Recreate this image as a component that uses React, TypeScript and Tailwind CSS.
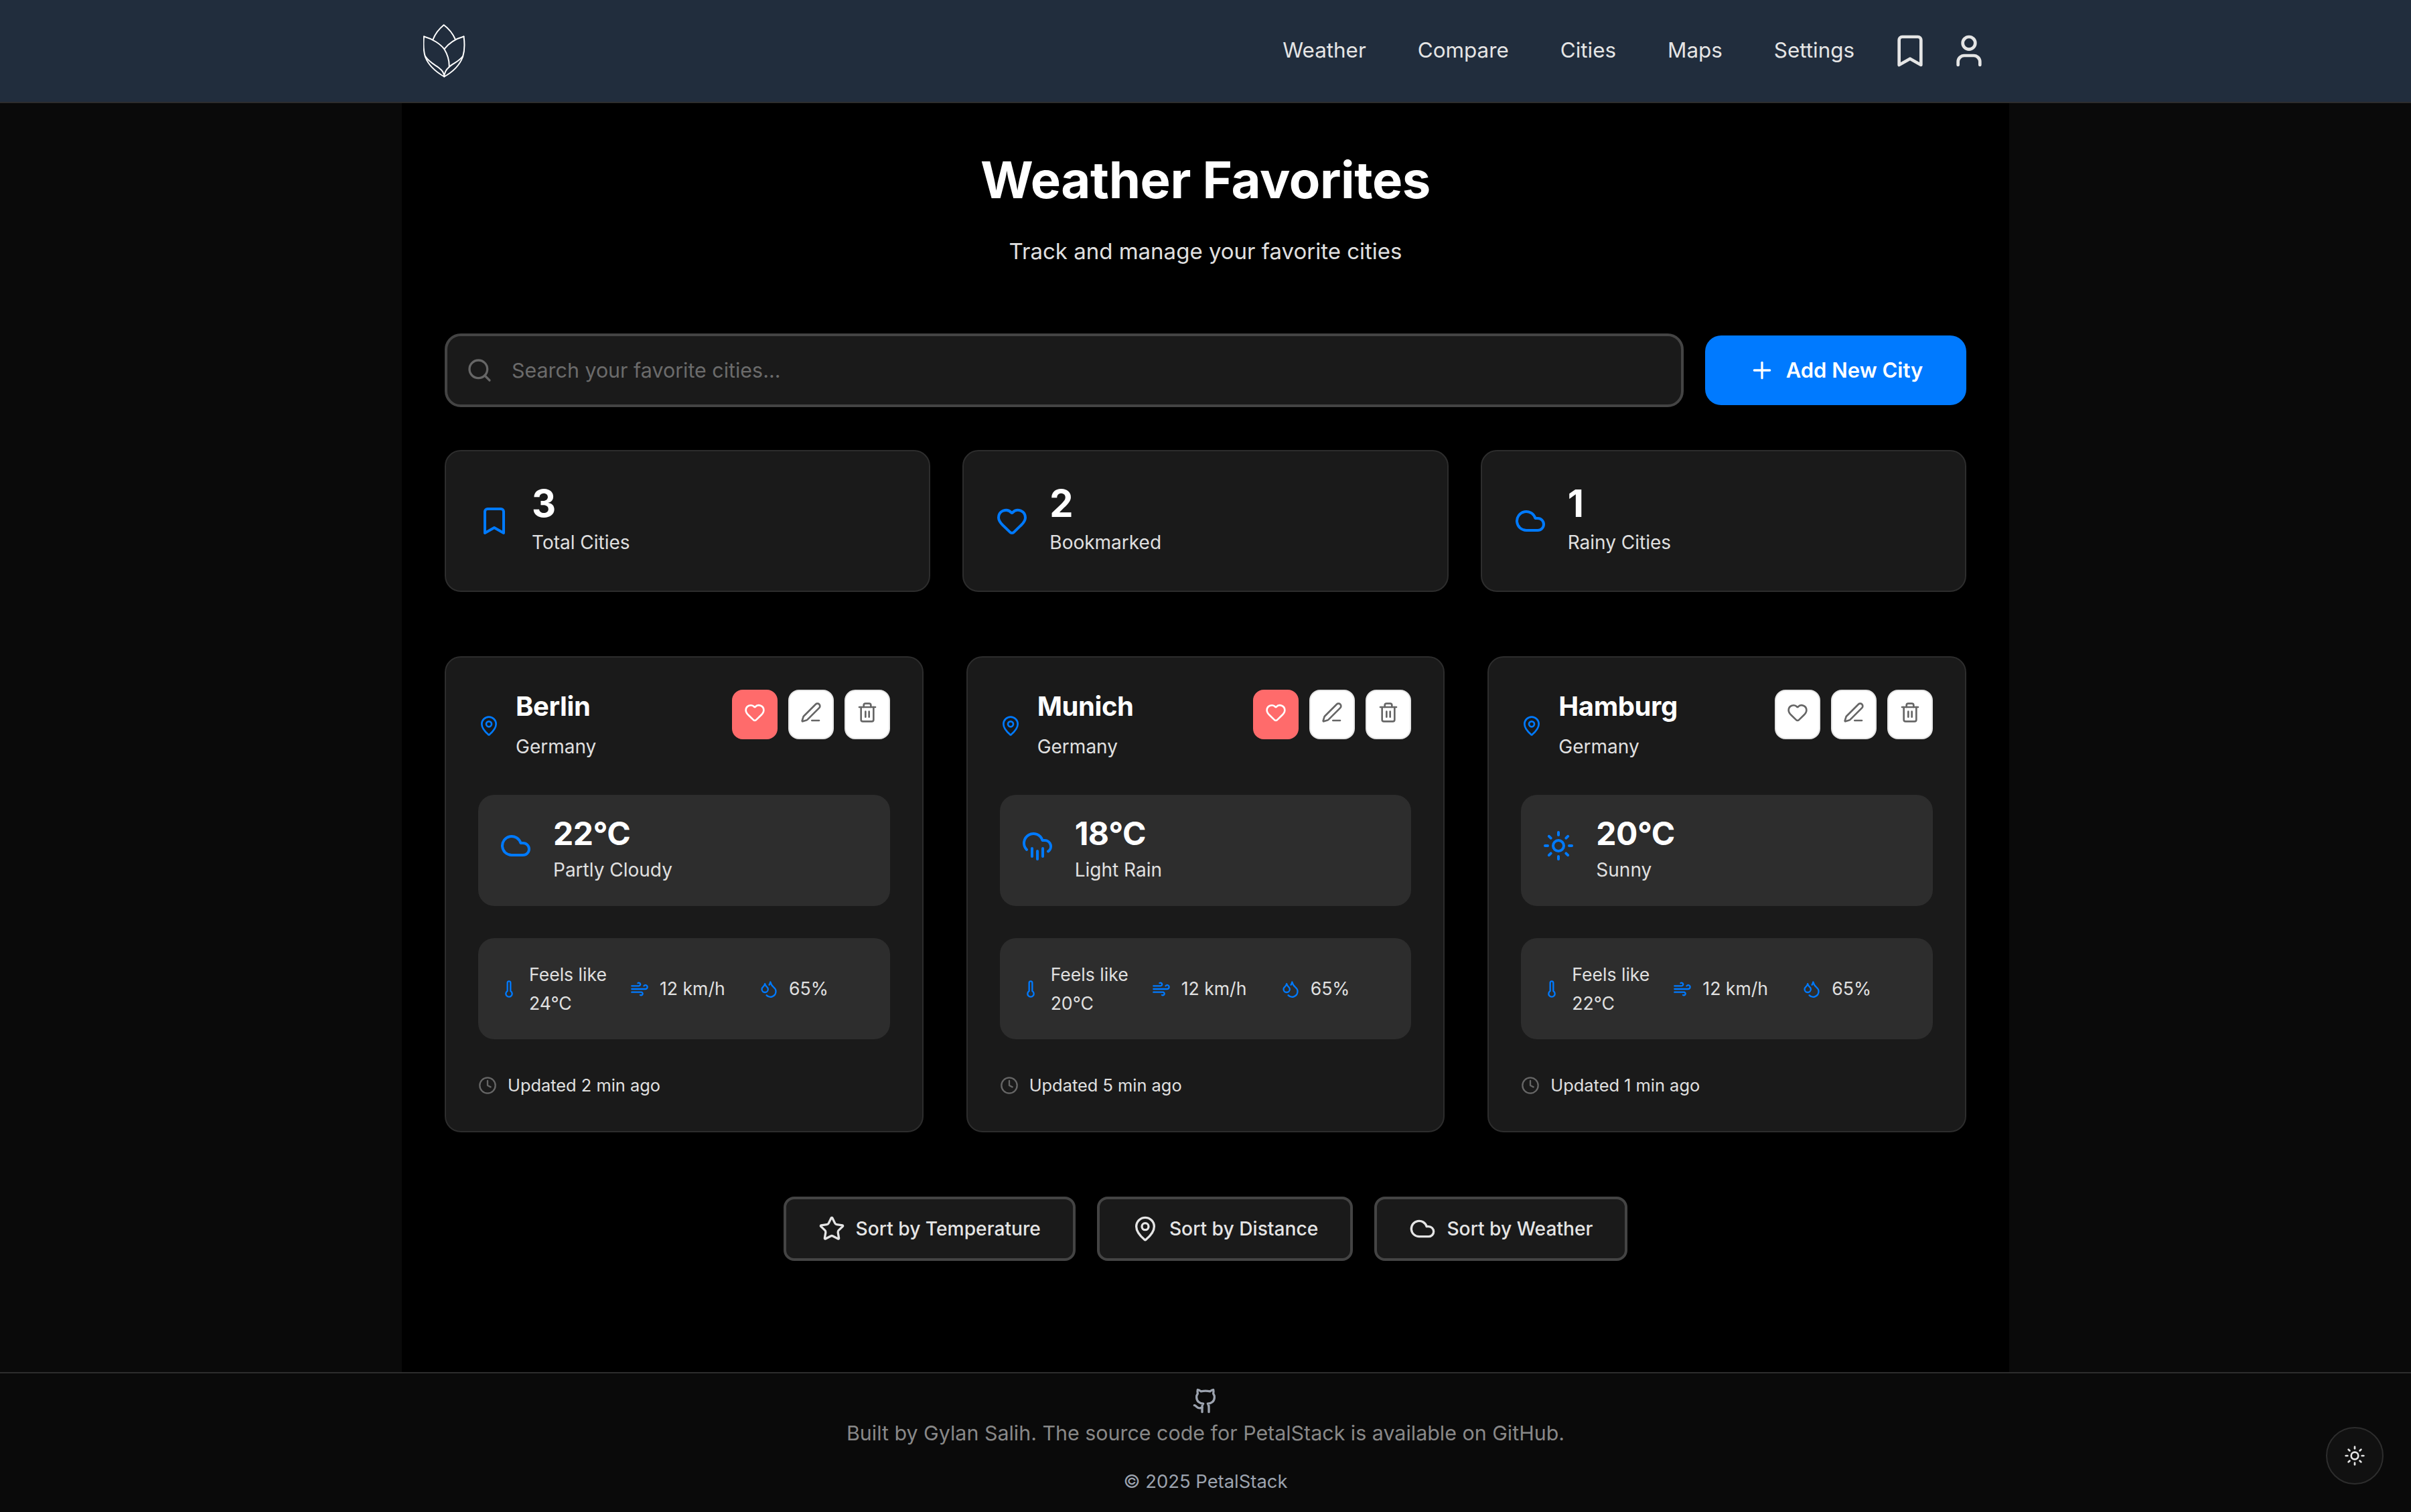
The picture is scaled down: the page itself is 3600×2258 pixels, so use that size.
import React from "react";
import {
  Bookmark,
  Clock,
  Cloud,
  CloudRain,
  Droplets,
  Github,
  Heart,
  MapPin,
  PenLine,
  Plus,
  Search,
  Star,
  Sun,
  Thermometer,
  Trash2,
  User,
  Wind,
} from "lucide-react";

const navLinks = ["Weather", "Compare", "Cities", "Maps", "Settings"];

const stats = [
  { icon: Bookmark, value: "3", label: "Total Cities" },
  { icon: Heart, value: "2", label: "Bookmarked" },
  { icon: Cloud, value: "1", label: "Rainy Cities" },
];

const cities = [
  { name: "Berlin", temp: "22°C", desc: "Partly Cloudy", icon: Cloud, feels: "24°C", updated: "Updated 2 min ago", liked: true },
  { name: "Munich", temp: "18°C", desc: "Light Rain", icon: CloudRain, feels: "20°C", updated: "Updated 5 min ago", liked: true },
  { name: "Hamburg", temp: "20°C", desc: "Sunny", icon: Sun, feels: "22°C", updated: "Updated 1 min ago", liked: false },
];

const sorts = [
  { icon: Star, label: "Sort by Temperature" },
  { icon: MapPin, label: "Sort by Distance" },
  { icon: Cloud, label: "Sort by Weather" },
];

function Logo() {
  return (
    <svg width="64" height="80" viewBox="32 16 64 80" fill="none" stroke="white" strokeWidth="2" strokeLinejoin="round" strokeLinecap="round">
      <path d="M46.5 39C50 30 57 22 62.7 17.3C69 22 76 30 80 39" />
      <path d="M33 34.5C46 38 58 46 63.3 53.3C68 61 71 72 70.7 80" />
      <path d="M92.5 34.5C80 38 70 45 63.3 53.3" />
      <path d="M33 34.5C32 45 32 55 35 65C40 78 52 88 63.3 94.5C75 88 86 78 91 65C94 55 94 45 92.5 34.5" />
      <path d="M35 64C40 72 48 76 55 81C60 85 63 88 63.3 94.5C63.5 88 66 84 70.7 80C76 75 85 72 91 64" />
    </svg>
  );
}

function CityCard({ city }: { city: (typeof cities)[number] }) {
  const WeatherIcon = city.icon;
  return (
    <div className="rounded-[24px] border-2 border-[#2d2d2d] bg-[#1a1a1a] px-[48px] pb-[47px] pt-[48px]">
      <div className="flex justify-between">
        <div className="flex items-center gap-[24px]">
          <MapPin size={32} className="text-[#007aff]" />
          <div>
            <h3 className="text-[40px] font-bold leading-[50px] tracking-[-0.4px] text-white">{city.name}</h3>
            <p className="mt-[12px] text-[28px] leading-[46px] text-[#e0e0e0]">Germany</p>
          </div>
        </div>
        <div className="flex gap-[16px]">
          <button className={`flex h-[74px] w-[68px] items-center justify-center rounded-[16px] border-2 pb-[6px] ${city.liked ? "border-[#ff6b6b] bg-[#ff6b6b] text-white" : "border-[#e5e5e5] bg-white text-[#666666]"}`}>
            <Heart size={32} />
          </button>
          <button className="flex h-[74px] w-[68px] items-center justify-center rounded-[16px] border-2 border-[#e5e5e5] bg-white pb-[6px] text-[#666666]">
            <PenLine size={32} />
          </button>
          <button className="flex h-[74px] w-[68px] items-center justify-center rounded-[16px] border-2 border-[#e5e5e5] bg-white pb-[6px] text-[#666666]">
            <Trash2 size={32} />
          </button>
        </div>
      </div>

      <div className="mt-[49px] flex h-[166px] items-center gap-[32px] rounded-[24px] bg-[#2d2d2d] px-[32px]">
        <WeatherIcon size={48} className="mb-[14px] text-[#007aff]" />
        <div>
          <p className="text-[48px] font-bold leading-[54px] tracking-[-0.5px] text-white">{city.temp}</p>
          <p className="mt-[4px] text-[28px] leading-[47px] text-[#e0e0e0]">{city.desc}</p>
        </div>
      </div>

      <div className="mt-[48px] grid h-[151px] grid-cols-[195px_193px_1fr] items-center rounded-[24px] bg-[#2d2d2d] px-[32px] text-[26.6px] leading-[43px] text-[#e0e0e0]">
        <div className="flex items-center gap-[16px]">
          <Thermometer size={28} className="text-[#007aff]" />
          <span className="w-[130px]">Feels like {city.feels}</span>
        </div>
        <div className="flex items-center gap-[16px]">
          <Wind size={28} className="text-[#007aff]" />
          <span>12 km/h</span>
        </div>
        <div className="flex items-center gap-[16px]">
          <Droplets size={28} className="text-[#007aff]" />
          <span>65%</span>
        </div>
      </div>

      <div className="mt-[48px] flex h-[42px] items-center gap-[16px] text-[25.4px] text-[#e0e0e0]">
        <Clock size={28} className="text-[#666666]" />
        <span>{city.updated}</span>
      </div>
    </div>
  );
}

export default function App() {
  return (
    <div className="relative min-h-[2258px] bg-[#0a0a0a] font-[Inter,sans-serif]">
      <nav className="h-[154px] border-b-2 border-[#2d2d2d] bg-[#212d3d]">
        <div className="mx-auto flex h-full w-[2400px] items-center justify-between px-[32px] text-[#e5e5e5]">
          <Logo />
          <div className="flex items-center gap-[32px]">
            <div className="flex items-center gap-[77px] pr-[23px] text-[31.4px]">
              {navLinks.map((l) => (
                <a key={l}>{l}</a>
              ))}
            </div>
            <Bookmark size={56} />
            <User size={56} />
          </div>
        </div>
      </nav>

      <main className="mx-auto h-[1895px] w-[2400px] bg-black px-[64px] pt-[64px]">
        <h1 className="text-center text-[76px] font-bold leading-[100px] tracking-[-0.4px] text-white">Weather Favorites</h1>
        <p className="mt-[30px] text-center text-[33px] leading-[54px] text-[#e0e0e0]">Track and manage your favorite cities</p>

        <div className="mt-[96px] flex items-center gap-[32px]">
          <div className="flex h-[110px] flex-1 items-center gap-[28px] rounded-[24px] border-4 border-[#444444] bg-[#1a1a1a] pl-[28px] pr-[32px]">
            <Search size={40} className="shrink-0 text-[#666666]" />
            <input
              placeholder="Search your favorite cities..."
              className="flex-1 bg-transparent pt-[2px] text-[30.4px] text-white outline-none placeholder:text-[#6b6b6b]"
            />
          </div>
          <button className="flex h-[104px] w-[390px] items-center justify-center gap-[16px] rounded-[24px] bg-[#007aff] text-[31px] font-semibold text-white">
            <Plus size={40} />
            Add New City
          </button>
        </div>

        <div className="mt-[64px] grid grid-cols-3 gap-[48px]">
          {stats.map((s) => {
            const Icon = s.icon;
            return (
              <div key={s.label} className="flex h-[212px] items-center gap-[32px] rounded-[24px] border-2 border-[#2d2d2d] bg-[#1a1a1a] px-[48px]">
                <Icon size={48} className="text-[#007aff]" />
                <div>
                  <p className="text-[56px] font-bold leading-[60px] text-white">{s.value}</p>
                  <p className="mt-[4px] text-[28px] leading-[48px] text-[#e0e0e0]">{s.label}</p>
                </div>
              </div>
            );
          })}
        </div>

        <div className="mt-[96px] grid grid-cols-3 gap-[64px]">
          {cities.map((c) => (
            <CityCard key={c.name} city={c} />
          ))}
        </div>

        <div className="mt-[96px] flex justify-center gap-[32px]">
          {sorts.map((s) => {
            const Icon = s.icon;
            return (
              <button key={s.label} className="flex h-[96px] items-center gap-[16px] rounded-[16px] border-4 border-[#444444] bg-[#1a1a1a] px-[48px] text-[28.2px] font-medium text-[#e5e5e5]">
                <Icon size={40} />
                {s.label}
              </button>
            );
          })}
        </div>
      </main>

      <footer className="flex h-[209px] flex-col items-center border-t-2 border-[#2d2d2d] bg-[#0a0a0a] pt-[21px]">
        <Github size={40} className="text-[#9ca3af]" />
        <p className="mt-[3px] text-[30.4px] leading-[50px] text-[#888888]">
          Built by Gylan Salih. The source code for PetalStack is available on GitHub.
        </p>
        <p className="mt-[23px] text-[27.4px] leading-[48px] text-[#9ca3af]">© 2025 PetalStack</p>
      </footer>

      <button className="absolute bottom-[41px] right-[41px] flex size-[86px] items-center justify-center rounded-full border-2 border-[#2d2d2d] bg-[#111111] text-[#e5e5e5]">
        <Sun size={32} />
      </button>
    </div>
  );
}
